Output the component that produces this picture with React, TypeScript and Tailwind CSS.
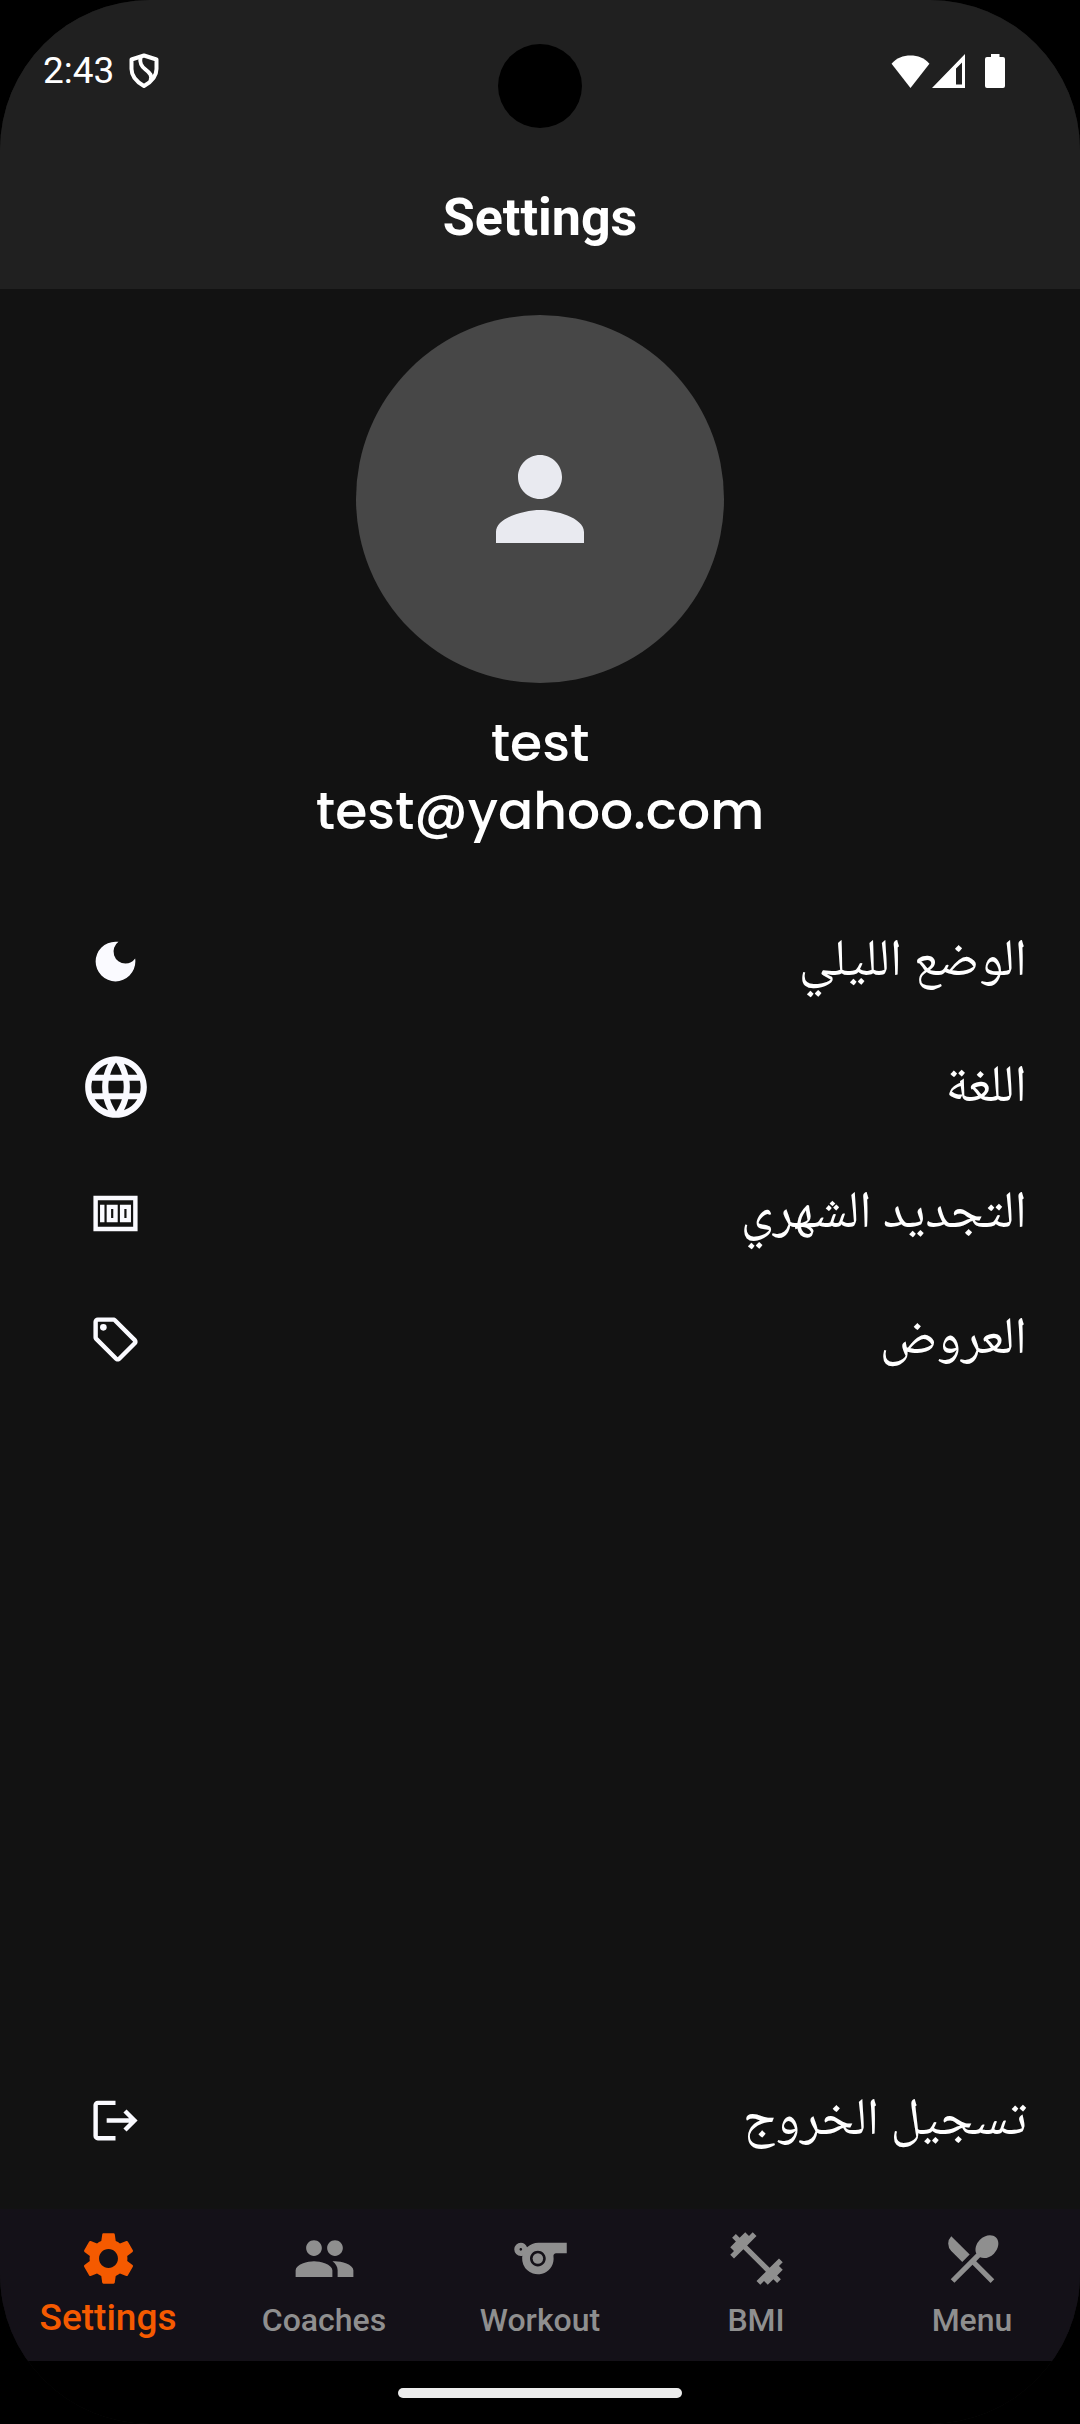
import type { ComponentType, ReactNode } from "react";
import {
  MdDarkMode,
  MdFitnessCenter,
  MdLanguage,
  MdLogout,
  MdOutlineLocalOffer,
  MdPeople,
  MdPerson,
  MdRestaurantMenu,
  MdSettings,
  MdSports,
} from "react-icons/md";

function ShieldIcon() {
  return (
    <svg viewBox="0 0 32 36" className="h-9 w-8" fill="none" stroke="currentColor" strokeWidth="4" strokeLinejoin="round" aria-hidden="true">
      <path d="M16 2.500 28.500 6.500V16c0 7.500-4.500 12.500-12.500 17C8 28.500 3.500 23.500 3.500 16V6.500Z" />
      <path d="M12.500 4C11.500 10 13 13 17.500 16.500c4.500 3.500 7 6 5 11" />
    </svg>
  );
}

function WifiIcon() {
  return (
    <svg viewBox="0 0 40 34" className="h-[33px] w-[39px]" fill="currentColor" aria-hidden="true">
      <path d="M20 34 .5 9C5.500 3 12.500.5 20 .5S34.500 3 39.500 9Z" />
    </svg>
  );
}

function SignalIcon() {
  return (
    <svg viewBox="0 0 33 34" className="h-[34px] w-[33px]" fill="currentColor" fillRule="evenodd" aria-hidden="true">
      <path d="M33 0v34H0ZM30 8.500l-6 6V30.500h6Z" />
    </svg>
  );
}

function BatteryIcon() {
  return (
    <svg viewBox="0 0 20 34" className="h-[34px] w-5" fill="currentColor" aria-hidden="true">
      <path d="M6 0h8.500v3H18a2 2 0 0 1 2 2v27a2 2 0 0 1-2 2H2a2 2 0 0 1-2-2V5a2 2 0 0 1 2-2h4Z" />
    </svg>
  );
}

function MoneyIcon({ className }: { className?: string }) {
  return (
    <svg viewBox="0 0 24 24" className={className} fill="currentColor" fillRule="evenodd" aria-hidden="true">
      <path d="M2 4h20v16H2ZM4 6v12h16V6ZM5 8h2v8H5ZM8 8h5v8H8ZM10 10v4h1v-4ZM14 8h5v8h-5ZM16 10v4h1v-4Z" />
    </svg>
  );
}

function SettingRow({ label, children }: { label: string; children: ReactNode }) {
  return (
    <button
      type="button"
      dir="rtl"
      className="flex h-[126px] w-full items-center justify-between px-[53px] text-[#fafaff]"
    >
      <span className="pt-1.5 font-['Noto_Naskh_Arabic','DejaVu_Sans',sans-serif] text-[52px] leading-[80px] text-white">{label}</span>
      <span className="flex w-[125px] justify-center">{children}</span>
    </button>
  );
}

type Tab = { label: string; Icon: ComponentType<{ className?: string }> };

const tabs: Tab[] = [
  { label: "Settings", Icon: MdSettings },
  { label: "Coaches", Icon: MdPeople },
  { label: "Workout", Icon: MdSports },
  { label: "BMI", Icon: MdFitnessCenter },
  { label: "Menu", Icon: MdRestaurantMenu },
];

export default function App() {
  return (
    <div className="bg-black font-[Roboto,sans-serif] text-white">
      <div className="flex min-h-screen flex-col overflow-hidden rounded-[150px] bg-[#121212]">
        <header className="relative bg-[#202020]">
          <div className="flex h-[142px] items-center justify-between pr-[75px] pl-[43px]">
            <div className="flex items-center gap-3.5">
              <span className="text-[37px] leading-[44px]">2:43</span>
              <ShieldIcon />
            </div>
            <div className="flex items-center">
              <WifiIcon />
              <span className="ml-0.5">
                <SignalIcon />
              </span>
              <span className="ml-5">
                <BatteryIcon />
              </span>
            </div>
          </div>
          <div className="absolute top-11 left-1/2 size-[84px] -translate-x-1/2 rounded-full bg-black" />
          <h1 className="flex h-[147px] items-center justify-center pt-1 text-[52px] font-bold">Settings</h1>
        </header>

        <main className="flex flex-1 flex-col pt-[26px] pb-[26px]">
          <div className="flex flex-col items-center">
            <div className="flex size-[368px] items-center justify-center rounded-full bg-[#474747]">
              <MdPerson className="size-[132px] text-[#e9eaf0]" />
            </div>
            <div className="mt-[26px] text-center font-[Poppins,Inter,sans-serif] text-[52px] leading-[68px] font-medium">
              <p>test</p>
              <p>test@yahoo.com</p>
            </div>
          </div>

          <div className="mt-[53px]">
            <SettingRow label="الوضع الليلي">
              <MdDarkMode className="size-[53px]" />
            </SettingRow>
            <SettingRow label="اللغة">
              <MdLanguage className="size-[74px]" />
            </SettingRow>
            <SettingRow label="التجديد الشهري">
              <MoneyIcon className="size-[53px]" />
            </SettingRow>
            <SettingRow label="العروض">
              <MdOutlineLocalOffer className="size-[53px]" />
            </SettingRow>
          </div>

          <div className="mt-auto">
            <SettingRow label="تسجيل الخروج">
              <MdLogout className="size-[53px]" />
            </SettingRow>
          </div>
        </main>

        <nav className="grid h-[152px] grid-cols-5 bg-[#141118]">
          {tabs.map(({ label, Icon }, i) => (
            <a
              key={label}
              href="#"
              aria-current={i === 0 ? "page" : undefined}
              className={
                i === 0
                  ? "flex flex-col items-center pt-[18px] text-[37px] leading-[56px] font-medium text-[#f55a00]"
                  : "flex flex-col items-center pt-[18px] text-[32px] leading-[60px] font-medium text-[#8f8f8f]"
              }
            >
              <Icon className="size-[63px]" />
              <span>{label}</span>
            </a>
          ))}
        </nav>
        <div className="flex h-[63px] items-center justify-center bg-black">
          <div className="h-[10px] w-[284px] rounded-full bg-[#ececec]" />
        </div>
      </div>
    </div>
  );
}
